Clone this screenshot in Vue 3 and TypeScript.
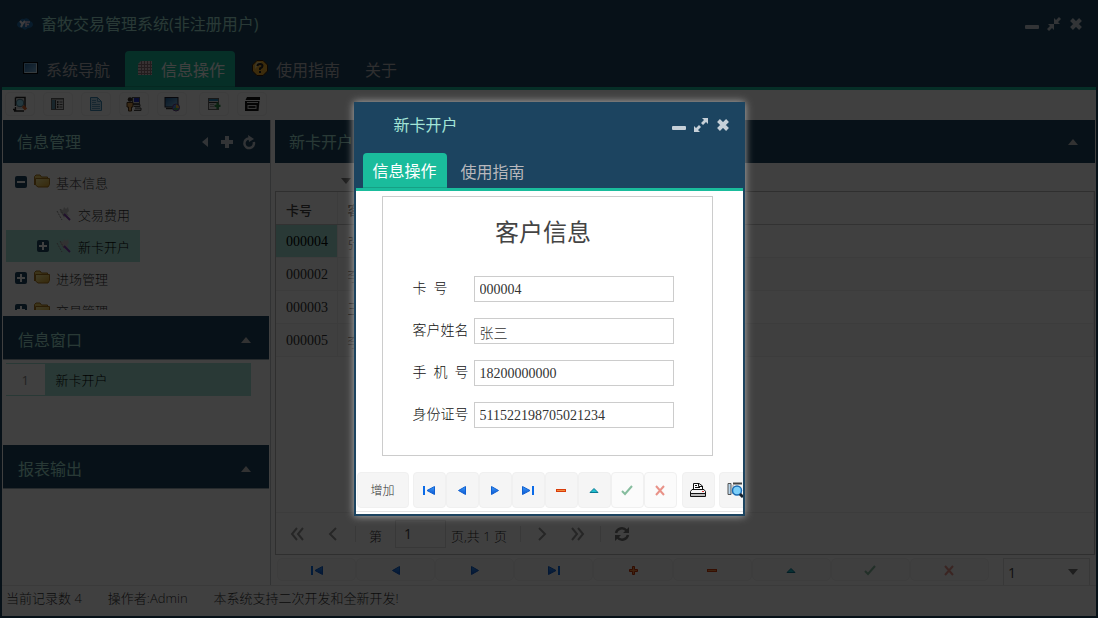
<script setup lang="ts">
import { ref } from 'vue'

interface TreeNode {
  id: number
  label: string
  icon: string
  toggle: string
  child?: boolean
  selected?: boolean
}

interface NavAction {
  icon: string
  label: string
  disabled?: boolean
}

const mainTabs = [
  { label: '系统导航', icon: 'i-screen' },
  { label: '信息操作', icon: 'i-grid', active: true },
  { label: '使用指南', icon: 'i-help' },
  { label: '关于', icon: '' },
]

const tools = [
  { icon: 'i-find', label: '查找' },
  { icon: 'i-list', label: '列表' },
  { icon: 'i-doc', label: '文档' },
  { icon: 'i-user', label: '用户' },
  { icon: 'i-display', label: '显示' },
  { icon: 'i-import', label: '导入', spaced: true },
  { icon: 'i-card', label: '窗口' },
]

const nodes: TreeNode[] = [
  { id: 1, label: '基本信息', icon: 'i-folder', toggle: 'i-collapse' },
  { id: 2, label: '交易费用', icon: 'i-leaf', toggle: '', child: true },
  { id: 3, label: '新卡开户', icon: 'i-leaf', toggle: 'i-expand', child: true, selected: true },
  { id: 4, label: '进场管理', icon: 'i-folder', toggle: 'i-expand' },
  { id: 5, label: '交易管理', icon: 'i-folder', toggle: 'i-expand' },
]

const customers = [
  { card: '000004', name: '张三' },
  { card: '000002', name: '李四' },
  { card: '000003', name: '王五' },
  { card: '000005', name: '李六' },
]

const mainNav: NavAction[] = [
  { icon: 'i-first', label: '首记录' },
  { icon: 'i-prev', label: '上一条' },
  { icon: 'i-next', label: '下一条' },
  { icon: 'i-last', label: '末记录' },
  { icon: 'i-add', label: '增加' },
  { icon: 'i-remove', label: '删除' },
  { icon: 'i-up', label: '编辑' },
  { icon: 'i-check', label: '保存', disabled: true },
  { icon: 'i-cancel', label: '取消', disabled: true },
]
const dialogNav = mainNav.filter((a) => a.icon !== 'i-add')

const fields = ref([
  { id: 'card', label: '卡  号', value: '000004' },
  { id: 'name', label: '客户姓名', value: '张三' },
  { id: 'phone', label: '手  机  号', value: '18200000000' },
  { id: 'idno', label: '身份证号', value: '511522198705021234' },
])

const page = ref('1')
const copies = ref('1')
</script>

<template>
  <svg class="sprite" aria-hidden="true">
    <defs>
      <linearGradient id="g-blue" x1="0" y1="0" x2="1" y2="1">
        <stop offset="0" stop-color="#1d5f9c" /><stop offset="1" stop-color="#8cc4ec" />
      </linearGradient>
      <linearGradient id="g-arrow" x1="0" y1="0" x2="0" y2="1">
        <stop offset="0" stop-color="#3c9af8" /><stop offset="1" stop-color="#0a55d4" />
      </linearGradient>
      <linearGradient id="g-folder" x1="0" y1="0" x2="1" y2="1">
        <stop offset="0" stop-color="#fff2a0" /><stop offset="1" stop-color="#d9a32a" />
      </linearGradient>
    </defs>
    <symbol id="i-logo" viewBox="0 0 16 16">
      <path d="M3 5Q4 2 7 3Q11 1 13 5Q16 6 16 9Q15 12 11 12L8 14L5 12Q1 12 0 9Q0 6 3 5Z" fill="#2272b0" />
      <path d="M3 5L5.500 8L8 5M5.500 8L4 11" fill="none" stroke="#f4eef6" stroke-width="2" />
      <path d="M9 11V6H13M9 8.500H12" fill="none" stroke="#e6c8dc" stroke-width="1.500" />
    </symbol>
    <symbol id="i-screen" viewBox="0 0 16 16">
      <rect x="1.500" y="2.500" width="14" height="11" fill="url(#g-blue)" stroke="#020608" />
      <path d="M2.500 12.500V3.500H14.500" fill="none" stroke="#7fb2d8" />
      <path d="M2.500 12.500H14.500V3.500" fill="none" stroke="#d7edf8" />
    </symbol>
    <symbol id="i-grid" viewBox="0 0 16 16">
      <path d="M4 1H15V15H1V4Z" fill="#dcc4c8" />
      <path d="M4.500 1V15M7.500 1V15M10.500 1V15M13.500 1V15M1 4.500H15M1 7.500H15M1 10.500H15M1 13.500H15" stroke="#8a7478" />
    </symbol>
    <symbol id="i-help" viewBox="0 0 16 16">
      <path d="M5 .5H11L15.500 5V11L11 15.500H5L.5 11V5Z" fill="#f0b030" stroke="#3a1c04" />
      <path d="M5 2H9L3 9V5Z" fill="#f8dc90" />
      <path d="M5.500 6Q5.500 4 8 4T10.500 6Q10.500 7.500 8 8.500V10M8 11V13" fill="none" stroke="#242424" stroke-width="2" />
    </symbol>
    <symbol id="i-find" viewBox="0 0 16 16">
      <path d="M3.500 1.500H13V13M3.500 1.500V10M1 13.500H3.500V11M2 15H12" fill="none" stroke="#222" stroke-width="1.500" />
      <path d="M4.500 2.500H12V13H4.500Z" fill="#d8d8d8" />
      <circle cx="8" cy="7" r="3.800" fill="#90dcf4" stroke="#4a7484" />
      <path d="M11 10L14 13.500" stroke="#d8662c" stroke-width="3" />
    </symbol>
    <symbol id="i-list" viewBox="0 0 16 16">
      <rect x="1.500" y="2.500" width="12" height="11" fill="#dcdcdc" stroke="#666" />
      <path d="M1.500 3H14" stroke="#666" />
      <rect x="2" y="4" width="3" height="9" fill="#5f94ac" />
      <path d="M5.500 4V13" stroke="#444" />
      <path d="M7 6H8.500M7 8.500H8.500M7 11H8.500" stroke="#111" stroke-width="1.500" />
      <path d="M9.500 6H12.500M9.500 8.500H12.500M9.500 11H12.500" stroke="#555" />
    </symbol>
    <symbol id="i-doc" viewBox="0 0 16 16">
      <path d="M2.500 1.500H9.500L13.500 5.500V14.500H2.500Z" fill="#b7dcf0" stroke="#3f88b4" />
      <path d="M9.500 1.500V5.500H13.500M4 4.500H8M4 6.500H8M4 8.500H12M4 10.500H12M4 12.500H12" fill="none" stroke="#5c9cc0" />
    </symbol>
    <symbol id="i-user" viewBox="0 0 16 16">
      <rect x="6.500" y="1.500" width="7" height="6" fill="#ccc" stroke="#555" />
      <rect x="8" y="2" width="5" height="4" fill="#2434c8" />
      <path d="M7 8.500H14V10.500H8M9 12H15V14.500H8" fill="#bbb" stroke="#444" />
      <circle cx="4" cy="3.500" r="2.300" fill="#332a24" />
      <path d="M1 6.500H7V11H5.500V15H2.500V11H1Z" fill="#e0a050" stroke="#4a3018" />
    </symbol>
    <symbol id="i-display" viewBox="0 0 16 16">
      <rect x="1" y="1.500" width="13" height="9.500" fill="url(#g-blue)" stroke="#223" />
      <path d="M2 12.500H9" stroke="#333" stroke-width="1.500" />
      <circle cx="12" cy="11.500" r="3.500" fill="#5a8be0" stroke="#6a3c80" />
      <path d="M12 8.500Q15 9 15 12H12Z" fill="#edbd39" /><path d="M12 11.500L14.500 13.500Q11 15.500 9.500 12.500Z" fill="#43ac54" />
    </symbol>
    <symbol id="i-import" viewBox="0 0 16 16">
      <rect x="2.500" y="2.500" width="10" height="11" fill="#e0e0e0" stroke="#666" />
      <path d="M3 4H12" stroke="#2a86bc" stroke-width="2" />
      <path d="M3 6.500H12" stroke="#333" /><path d="M4 8.500H8M4 10.500H8" stroke="#999" />
      <path d="M11.500 6.500V13M8.500 9.800H14.500" stroke="#2d8a48" stroke-width="2.200" />
    </symbol>
    <symbol id="i-card" viewBox="0 0 16 16">
      <path d="M3 1H16V4H1.500Z" fill="#111" />
      <path d="M1 5H15.500L14.500 15H1Z" fill="#111" />
      <path d="M3 6.500H14" stroke="#ddd" />
      <rect x="4" y="9.500" width="8" height="3" fill="#222" stroke="#ddd" />
    </symbol>
    <symbol id="i-folder" viewBox="0 0 16 16">
      <path d="M.5 11V2.500L2 1H6L7.500 3H13.500V5" fill="#f0cd63" stroke="#a8741c" />
      <path d="M1.500 4.500H15.500V10.500L14 13H4L1.500 11Z" fill="url(#g-folder)" stroke="#a8741c" />
    </symbol>
    <symbol id="i-leaf" viewBox="0 0 16 16">
      <path d="M5 3L7 4L8 1L10 3L12 1L13 5L11 7L13 10L10 9L8 12L6 8L4 6Z" fill="#c8c8c8" />
      <path d="M1 5L6 14M4 3L8 10" stroke="#8f8f8f" stroke-dasharray="2 1" />
      <path d="M8 8L14 14" stroke="#8040b0" stroke-width="2" />
    </symbol>
    <symbol id="i-expand" viewBox="0 0 12 12">
      <rect width="12" height="12" rx="2" fill="#1c4460" /><path d="M2 6H10M6 2V10" stroke="#fff" stroke-width="2" />
    </symbol>
    <symbol id="i-collapse" viewBox="0 0 12 12">
      <rect width="12" height="12" rx="2" fill="#1c4460" /><path d="M2 6H10" stroke="#fff" stroke-width="2" />
    </symbol>
    <symbol id="i-min" viewBox="0 0 16 16"><rect x="1" y="9" width="14" height="4" rx="1" fill="#c6d0d8" /></symbol>
    <symbol id="i-close" viewBox="0 0 16 16"><path d="M3.500 3.500L12.500 12.500M12.500 3.500L3.500 12.500" stroke="#c6d0d8" stroke-width="4" /></symbol>
    <symbol id="i-max" viewBox="0 0 16 16">
      <path d="M9 1H15V7L13 5L10 8L8 6L11 3ZM1 15V9L3 11L6 8L8 10L5 13L7 15Z" fill="#c6d0d8" />
    </symbol>
    <symbol id="i-restore" viewBox="0 0 16 16">
      <path d="M8 2L10 4L13 1L15 3L12 6L14 8H8ZM8 14L6 12L3 15L1 13L4 10L2 8H8Z" fill="#c6d0d8" />
    </symbol>
    <symbol id="i-left" viewBox="0 0 16 16"><path d="M11 3V13L5 8Z" fill="#c6d0d8" /></symbol>
    <symbol id="i-plus" viewBox="0 0 16 16"><path d="M8 2V14M2 8H14" stroke="#c6d0d8" stroke-width="4" /></symbol>
    <symbol id="i-reload" viewBox="0 0 16 16">
      <path d="M12.800 8A4.800 4.800 0 1 1 8 4.500" fill="none" stroke="#c6d0d8" stroke-width="2.500" /><path d="M7 1L13 5L8 8Z" fill="#c6d0d8" />
    </symbol>
    <symbol id="i-fold" viewBox="0 0 16 16"><path d="M3 11L8 5L13 11Z" fill="#c6c6c6" /></symbol>
    <symbol id="i-down" viewBox="0 0 16 16"><path d="M3 5H13L8 11Z" fill="#777" /></symbol>
    <symbol id="i-first" viewBox="0 0 16 16">
      <path d="M3 4V13" stroke="#0b6be8" stroke-width="2" /><path d="M13.500 4.500V12.500L6 8.500Z" fill="url(#g-arrow)" stroke="#1060d0" />
    </symbol>
    <symbol id="i-prev" viewBox="0 0 16 16"><path d="M11.500 4.500V12.500L4.500 8.500Z" fill="url(#g-arrow)" stroke="#1060d0" /></symbol>
    <symbol id="i-next" viewBox="0 0 16 16"><path d="M4.500 4.500V12.500L11.500 8.500Z" fill="url(#g-arrow)" stroke="#1060d0" /></symbol>
    <symbol id="i-last" viewBox="0 0 16 16">
      <path d="M13 4V13" stroke="#0b6be8" stroke-width="2" /><path d="M2.500 4.500V12.500L10 8.500Z" fill="url(#g-arrow)" stroke="#1060d0" />
    </symbol>
    <symbol id="i-add" viewBox="0 0 16 16">
      <path d="M7.500 4.500H9.500V7.500H12.500V9.500H9.500V12.500H7.500V9.500H4.500V7.500H7.500Z" fill="#f58a3c" stroke="#c83206" />
    </symbol>
    <symbol id="i-remove" viewBox="0 0 16 16"><rect x="3.500" y="7.500" width="9" height="2" fill="#f58a3c" stroke="#d83c0a" /></symbol>
    <symbol id="i-up" viewBox="0 0 16 16"><path d="M4 10.500L8 6.500L12 10.500Z" fill="#20c0d0" stroke="#087a94" /></symbol>
    <symbol id="i-check" viewBox="0 0 16 16"><path d="M3 9L6 12L13 4" fill="none" stroke="#148044" stroke-width="2" /></symbol>
    <symbol id="i-cancel" viewBox="0 0 16 16"><path d="M4 4L12 13M12 4L4 13" stroke="#d82c18" stroke-width="2" /></symbol>
    <symbol id="i-print" viewBox="0 0 16 16">
      <path d="M3.500 7V1.500H9L12.500 4V7" fill="#fff" stroke="#111" /><path d="M8.500 1V4.500H12M5 3.500H7M5 5.500H10" fill="none" stroke="#111" />
      <path d="M2 7.500H14L15.500 9.500V14.500H.5V9.500Z" fill="#f4f4f4" stroke="#111" /><path d="M1 11.500H15" stroke="#111" /><path d="M1 13H15" stroke="#bbb" stroke-width="2" /><rect x="12" y="9" width="2" height="1" fill="#d33" />
    </symbol>
    <symbol id="i-preview" viewBox="0 0 16 16">
      <path d="M1 1.500H4V12.500H1Z" fill="#b8d4e8" stroke="#555" /><path d="M6 1.500H15" stroke="#444" stroke-width="2" /><path d="M6 3V12" stroke="#999" />
      <circle cx="10" cy="8.500" r="4.500" fill="#7cd0fa" stroke="#1a6cb4" stroke-width="1.500" /><path d="M13 12L16 15" stroke="#17212d" stroke-width="3" />
    </symbol>
    <symbol id="i-pleft" viewBox="0 0 16 16"><path d="M11 2L5 8L11 14" fill="none" stroke="#999" stroke-width="2" /></symbol>
    <symbol id="i-pfirst" viewBox="0 0 16 16"><path d="M8 2L3 8L8 14M14 2L9 8L14 14" fill="none" stroke="#999" stroke-width="2" /></symbol>
    <symbol id="i-pright" viewBox="0 0 16 16"><path d="M5 2L11 8L5 14" fill="none" stroke="#999" stroke-width="2" /></symbol>
    <symbol id="i-plast" viewBox="0 0 16 16"><path d="M2 2L7 8L2 14M8 2L13 8L8 14" fill="none" stroke="#999" stroke-width="2" /></symbol>
    <symbol id="i-sync" viewBox="0 0 16 16">
      <path d="M2 7A6 6 0 0 1 12.500 4.500M14 9A6 6 0 0 1 3.500 11.500" fill="none" stroke="#777" stroke-width="2.500" />
      <path d="M15 1V7H9ZM1 15V9H7Z" fill="#777" />
    </symbol>
  </svg>

  <div class="window">
    <header class="top">
      <div class="titlebar">
        <svg class="ico"><use href="#i-logo" /></svg>
        <h1>畜牧交易管理系统(非注册用户)</h1>
        <div class="controls">
          <button aria-label="最小化"><svg class="ico"><use href="#i-min" /></svg></button>
          <button aria-label="还原"><svg class="ico"><use href="#i-restore" /></svg></button>
          <button aria-label="关闭"><svg class="ico"><use href="#i-close" /></svg></button>
        </div>
      </div>
      <nav class="tabs">
        <button v-for="t in mainTabs" :key="t.label" class="tab" :class="{ active: t.active }">
          <svg v-if="t.icon" class="ico"><use :href="'#' + t.icon" /></svg>{{ t.label }}
        </button>
      </nav>
    </header>

    <div class="toolbar">
      <button v-for="t in tools" :key="t.icon" class="tool" :class="{ spaced: t.spaced }" :aria-label="t.label">
        <svg class="ico"><use :href="'#' + t.icon" /></svg>
      </button>
    </div>

    <div class="body">
      <aside class="side">
        <section class="panel-tree">
          <div class="bar">
            <h2>信息管理</h2>
            <button aria-label="收起"><svg class="ico"><use href="#i-left" /></svg></button>
            <button aria-label="展开"><svg class="ico"><use href="#i-plus" /></svg></button>
            <button aria-label="刷新"><svg class="ico"><use href="#i-reload" /></svg></button>
          </div>
          <ul class="tree">
            <li v-for="n in nodes" :key="n.id" class="node" :class="{ child: n.child, selected: n.selected }">
              <svg class="toggle"><use v-if="n.toggle" :href="'#' + n.toggle" /></svg>
              <svg class="ico"><use :href="'#' + n.icon" /></svg>
              <span>{{ n.label }}</span>
            </li>
          </ul>
        </section>
        <section class="panel-windows">
          <div class="bar inset">
            <h2>信息窗口</h2>
            <button aria-label="折叠"><svg class="ico"><use href="#i-fold" /></svg></button>
          </div>
          <table class="opened">
            <tbody><tr><td class="num">1</td><td class="cur">新卡开户</td></tr></tbody>
          </table>
        </section>
        <section class="panel-reports">
          <div class="bar inset">
            <h2>报表输出</h2>
            <button aria-label="折叠"><svg class="ico"><use href="#i-fold" /></svg></button>
          </div>
        </section>
      </aside>

      <main class="main">
        <div class="bar">
          <h2>新卡开户</h2>
          <button aria-label="折叠"><svg class="ico"><use href="#i-fold" /></svg></button>
        </div>
        <div class="filter">
          <button aria-label="筛选"><svg class="ico"><use href="#i-down" /></svg></button>
        </div>
        <div class="gridbox">
          <table class="grid">
            <thead><tr><th class="c1">卡号</th><th>客户姓名</th></tr></thead>
            <tbody>
              <tr v-for="(c, i) in customers" :key="c.card" :class="{ picked: i === 0 }">
                <td class="c1">{{ c.card }}</td><td>{{ c.name }}</td>
              </tr>
            </tbody>
          </table>
          <div class="rest"></div>
          <div class="pager">
            <button aria-label="首页"><svg class="ico"><use href="#i-pfirst" /></svg></button>
            <button aria-label="上一页"><svg class="ico"><use href="#i-pleft" /></svg></button>
            <i class="sep"></i>
            <label for="page">第</label>
            <input id="page" v-model="page" />
            <span>页,共 1 页</span>
            <i class="sep"></i>
            <button aria-label="下一页"><svg class="ico"><use href="#i-pright" /></svg></button>
            <button aria-label="末页"><svg class="ico"><use href="#i-plast" /></svg></button>
            <i class="sep"></i>
            <button aria-label="刷新"><svg class="ico"><use href="#i-sync" /></svg></button>
          </div>
        </div>
        <div class="navrow">
          <button v-for="a in mainNav" :key="a.icon" class="navbtn" :disabled="a.disabled" :aria-label="a.label">
            <svg class="ico"><use :href="'#' + a.icon" /></svg>
          </button>
          <div class="combo">
            <select v-model="copies" aria-label="记录"><option>1</option></select>
            <svg class="ico"><use href="#i-down" /></svg>
          </div>
        </div>
      </main>
    </div>

    <footer class="status">
      <span>当前记录数 4</span><span>操作者:Admin</span><span>本系统支持二次开发和全新开发!</span>
    </footer>
  </div>

  <div class="mask">
    <div class="dialog" role="dialog" aria-labelledby="dlg-title">
      <header class="top">
        <div class="titlebar">
          <h1 id="dlg-title">新卡开户</h1>
          <div class="controls">
            <button aria-label="最小化"><svg class="ico"><use href="#i-min" /></svg></button>
            <button aria-label="最大化"><svg class="ico"><use href="#i-max" /></svg></button>
            <button aria-label="关闭"><svg class="ico"><use href="#i-close" /></svg></button>
          </div>
        </div>
        <nav class="tabs">
          <button class="tab active">信息操作</button>
          <button class="tab">使用指南</button>
        </nav>
      </header>
      <form class="form" @submit.prevent>
        <h2>客户信息</h2>
        <div v-for="f in fields" :key="f.id" class="field">
          <label :for="f.id">{{ f.label }}</label>
          <input :id="f.id" v-model="f.value" />
        </div>
      </form>
      <div class="actions">
        <button class="act text">增加</button>
        <div class="group">
          <button v-for="a in dialogNav" :key="a.icon" class="act" :disabled="a.disabled" :aria-label="a.label">
            <svg class="ico"><use :href="'#' + a.icon" /></svg>
          </button>
        </div>
        <button class="act" aria-label="打印"><svg class="ico"><use href="#i-print" /></svg></button>
        <button class="act" aria-label="预览"><svg class="ico"><use href="#i-preview" /></svg></button>
      </div>
    </div>
  </div>
</template>

<style>
body {
  margin: 0;
  overflow: hidden;
}
</style>

<style scoped>
.sprite {
  position: absolute;
  width: 0;
  height: 0;
}
.window,
.mask {
  box-sizing: border-box;
  font-family: 'Open Sans', 'Noto Sans CJK SC', sans-serif;
  font-size: 13px;
  font-weight: 300;
  color: #333;
}
.window *,
.mask * {
  box-sizing: border-box;
}
button {
  margin: 0;
  padding: 0;
  border: 0;
  background: none;
  font: inherit;
  color: inherit;
  flex: none;
}
.ico {
  display: block;
  flex: none;
  width: 16px;
  height: 16px;
}
h1,
h2 {
  margin: 0;
  padding-bottom: 2px;
  font-weight: 400;
  font-size: 16px;
  color: #a3e4d7;
}
.window {
  display: flex;
  flex-direction: column;
  height: 100vh;
  border: 2px solid #1c4460;
  border-top: 0;
  background: #fff;
}
.top {
  background: #1c4460;
  border-bottom: 3px solid #1abc9c;
}
.titlebar {
  display: flex;
  align-items: center;
  height: 51px;
  padding: 0 12px 4px 15px;
}
.titlebar h1 {
  flex: 1;
  margin-left: 8px;
}
.controls {
  display: flex;
  gap: 6px;
}
.tabs {
  display: flex;
  gap: 5px;
  padding: 0 8px;
}
.tab {
  display: flex;
  align-items: center;
  height: 36px;
  padding: 0 10px;
  border-radius: 4px 4px 0 0;
  font-size: 16px;
  font-weight: 400;
  color: #b8b8bc;
}
.tab.active {
  background: #1abc9c;
  color: #fff;
  border-bottom: 1px solid #16a085;
}
.tab .ico {
  margin: 0 8px 2px 2px;
}
.toolbar {
  display: flex;
  gap: 8px;
  height: 30px;
  padding: 2px 3px 4px;
  background: #fff;
}
.tool {
  display: flex;
  align-items: center;
  justify-content: center;
  width: 30px;
  border: 1px solid #f3f3f3;
  border-radius: 4px;
  background: #fdfdfd;
}
.tool.spaced {
  margin-left: 4px;
}
.body {
  display: flex;
  gap: 4px;
  flex: 1;
  min-height: 0;
  padding: 0 1px;
}
.side {
  display: flex;
  flex-direction: column;
  width: 268px;
  border-right: 1px solid #c4c8cc;
}
.bar {
  display: flex;
  align-items: center;
  gap: 6px;
  height: 43px;
  padding: 0 14px;
  background: #1c4460;
}
.side .bar {
  padding-right: 13px;
}
.bar h2 {
  flex: 1;
}
.side .bar.inset {
  height: 44px;
  margin-right: 1px;
  padding: 4px 15px 0;
  border-bottom: 1px solid #9aaab5;
}
.panel-tree {
  height: 196px;
}
.tree {
  height: 147px;
  margin: 0;
  padding: 3px;
  overflow: hidden;
  list-style: none;
}
.node {
  display: flex;
  align-items: center;
  width: 134px;
  height: 32px;
  padding-left: 9px;
}
.node.child {
  padding-left: 31px;
}
.toggle {
  flex: none;
  width: 12px;
  height: 12px;
  margin-right: 7px;
}
.node .ico {
  margin-right: 6px;
}
.node.selected,
.cur {
  background: #a3e4d7;
  color: #000;
}
.panel-windows {
  height: 129px;
}
.opened {
  width: 245px;
  margin: 3px;
  border-collapse: collapse;
}
.opened td {
  height: 32px;
  padding: 0 0 1px 10px;
  border: 1px solid #a3e4d7;
}
.opened .num {
  width: 39px;
  padding: 0;
  border-left: 0;
  text-align: center;
  font-weight: 400;
  color: #888;
}
.panel-reports {
  flex: 1;
}
.main {
  display: flex;
  flex-direction: column;
  flex: 1;
  min-width: 0;
}
.filter {
  height: 28px;
  padding: 10px 0 0 63px;
}
.gridbox {
  display: flex;
  flex-direction: column;
  flex: 1;
  min-height: 0;
  border: 1px solid #bbb;
}
.grid {
  width: 100%;
  border-collapse: collapse;
}
.grid th,
.grid td {
  height: 33px;
  padding: 3px 0 0 10px;
  border: 0;
  border-right: 1px solid #f0f0f0;
  border-bottom: 1px solid #f0f0f0;
  text-align: left;
  font-family: 'Liberation Serif', 'Noto Sans CJK SC', serif;
  font-size: 14px;
}
.grid th {
  height: 32px;
  border-bottom: 1px solid #c8c8c8;
  font-size: 13px;
  font-weight: 500;
  color: #444;
}
.grid .c1 {
  width: 61px;
}
.grid .picked .c1 {
  background: #a3e4d7;
  color: #000;
}
.grid tr:nth-child(even) td {
  background: #fafafa;
}
.rest {
  flex: 1;
}
.pager {
  display: flex;
  align-items: center;
  height: 42px;
  padding: 0 0 0 13px;
  border-top: 1px solid #eee;
}
.pager button {
  margin-right: 20px;
}
.pager .sep {
  width: 1px;
  height: 16px;
  margin-right: 13px;
  background: #e4e4e4;
}
.pager button + .sep {
  margin-left: -6px;
}
.pager input {
  width: 51px;
  height: 28px;
  margin: 0 5px 0 13px;
  padding: 0 8px;
  border: 1px solid #ddd;
  background: #fff;
  font: inherit;
  font-size: 14px;
  font-weight: 400;
  color: #444;
}
.pager label,
.pager span {
  padding-top: 4px;
}
.pager span {
  margin-right: 13px;
}
.navrow {
  display: flex;
  height: 30px;
  padding: 3px 5px 0 2px;
}
.navbtn {
  display: flex;
  flex: 1;
  align-items: center;
  justify-content: center;
  height: 23px;
  border: 1px solid #f3f3f3;
  border-radius: 5px;
  background: #fafafa;
}
button:disabled .ico {
  opacity: 0.5;
}
.combo {
  display: flex;
  align-items: center;
  width: 87px;
  margin-left: 14px;
  padding-right: 8px;
  border: 1px solid #ddd;
  border-bottom: 0;
}
.combo select {
  flex: 1;
  padding: 0 4px;
  border: 0;
  background: none;
  appearance: none;
  font: inherit;
  font-size: 14px;
  font-weight: 400;
  color: #444;
}
.status {
  display: flex;
  align-items: center;
  gap: 26px;
  height: 31px;
  padding: 0 4px 7px;
  border-top: 1px solid #e8e8e8;
}
.mask {
  position: absolute;
  inset: 0;
  display: flex;
  align-items: center;
  justify-content: center;
  background: rgba(0, 0, 0, 0.75);
}
.dialog {
  width: 391px;
  border: 2px solid #1c4460;
  background: #fff;
  box-shadow: 0 0 8px #b4b4b4;
  overflow: hidden;
}
.dialog .titlebar {
  height: 49px;
  padding-bottom: 8px;
  padding-left: 30px;
}
.dialog .tabs {
  gap: 4px;
  padding: 0 7px;
}
.dialog .tab {
  height: 35px;
}
.form {
  width: 331px;
  height: 260px;
  margin: 5px 0 0 26px;
  padding: 18px 0 0 30px;
  border: 1px solid #ccc;
  font-family: 'Liberation Serif', 'Noto Sans CJK SC', serif;
  color: #111;
}
.form h2 {
  width: 261px;
  margin-bottom: 25px;
  padding: 0;
  font-size: 24px;
  line-height: 36px;
  text-align: center;
  color: #444;
}
.field {
  display: flex;
  align-items: center;
  height: 26px;
  margin-bottom: 16px;
  font-size: 14px;
}
.field label {
  width: 61px;
  padding-bottom: 4px;
  white-space: pre;
}
.field input {
  width: 200px;
  height: 26px;
  padding: 1px 5px 0;
  border: 1px solid #ccc;
  font: inherit;
  color: #333;
}
.actions {
  display: flex;
  gap: 4px;
  width: 400px;
  margin: 16px 0 2px;
  padding: 0 1px 3px;
  border-bottom: 1px solid #e4e4e4;
}
.group {
  display: flex;
  margin-right: 1px;
}
.act {
  display: flex;
  align-items: center;
  justify-content: center;
  width: 33px;
  height: 36px;
  border: 1px solid #f0f0f0;
  border-radius: 4px;
  background: #f5f5f5;
}
.act:disabled {
  background: #fbfbfb;
}
.act.text {
  width: 52px;
  padding-bottom: 1px;
  font-size: 12px;
}
</style>
